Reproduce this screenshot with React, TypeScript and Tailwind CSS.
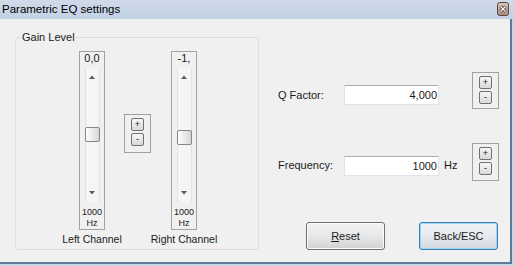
import type { ReactNode } from "react";

function Arrow({ up, className }: { up?: boolean; className?: string }) {
  return (
    <svg width="6" height="4" viewBox="0 0 6 4" className={className}>
      {up ? (
        <path d="M0 4 L3 0.5 L6 4 Z" fill="#5a5a5a" />
      ) : (
        <path d="M0 0 L3 3.5 L6 0 Z" fill="#5a5a5a" />
      )}
    </svg>
  );
}

function TinyButton({ children }: { children: ReactNode }) {
  return (
    <div className="flex h-[13px] w-[13px] items-center justify-center rounded-[2px] border border-[#707070] bg-linear-to-b from-[#f6f6f6] to-[#d9d9d9] text-[9px] leading-none text-[#222]">
      {children}
    </div>
  );
}

function PlusMinus({ className }: { className?: string }) {
  return (
    <div className={`flex w-[27px] flex-col items-center gap-[2px] border border-[#a0a0a0] pt-[3px] ${className ?? ""}`}>
      <TinyButton>+</TinyButton>
      <TinyButton>-</TinyButton>
    </div>
  );
}

function VSlider({ value, thumbOffset, label }: { value: string; thumbOffset: string; label: string }) {
  return (
    <div className="flex w-[26px] flex-col items-center">
      <div className="flex w-[26px] flex-col items-center border border-[#a3a3a3]">
        <div className="text-[11px] leading-[12px] text-[#1a1a1a]">{value}</div>
        {/* track */}
        <div className="mt-[4px] flex h-[134px] w-[15px] flex-col items-center bg-[#f5f5f5] shadow-[inset_1px_0_#e2e2e2,inset_-1px_0_#e2e2e2]">
          <Arrow up className="mt-[7px]" />
          <div
            className={`${thumbOffset} h-[15px] w-[15px] rounded-[2px] border border-[#858585] bg-linear-to-r from-white to-[#d6d6d6]`}
          />
          <Arrow className="mb-[7px] mt-auto" />
        </div>
        <div className="mt-[4px] text-[9px] leading-[12px] text-[#1a1a1a]">1000</div>
        <div className="text-[9px] leading-[11px] text-[#1a1a1a]">Hz</div>
      </div>
      <div className="mt-[3px] whitespace-nowrap text-[10.5px] leading-[13px] text-[#1a1a1a]">{label}</div>
    </div>
  );
}

function Field({ value }: { value: string }) {
  return (
    <div className="flex h-[20px] w-[95px] items-center justify-end border border-[#e2e3ea] border-t-[#abadb3] bg-white pr-[1px] text-[11px] text-[#1a1a1a]">
      {value}
    </div>
  );
}

export default function App() {
  return (
    <div className="flex h-[266px] w-[514px] flex-col bg-[#c6d4e6] font-['Liberation_Sans',Arial,sans-serif] text-black">
      {/* Title bar */}
      <div className="flex h-[19px] items-start justify-between bg-linear-to-b from-[#cfdaea] to-[#c3d2e5]">
        <span className="pl-[2px] text-[11.5px] leading-[19px] text-black">Parametric EQ settings</span>
        <svg width="12" height="14" viewBox="0 0 12 14" className="mr-[5px] mt-[2px]">
          <defs>
            <linearGradient id="closeGrad" x1="0" y1="0" x2="0" y2="1">
              <stop offset="0" stopColor="#dcc3bc" />
              <stop offset="1" stopColor="#a98479" />
            </linearGradient>
          </defs>
          <rect x="0.5" y="0.5" width="11" height="13" rx="2" fill="url(#closeGrad)" stroke="#5e463f" />
          <path d="M3.5 4.5 L8.5 9.5 M8.5 4.5 L3.5 9.5" stroke="#3b2d29" strokeWidth="2.8" />
          <path d="M3.5 4.5 L8.5 9.5 M8.5 4.5 L3.5 9.5" stroke="#ffffff" strokeWidth="1.3" />
        </svg>
      </div>

      {/* Body */}
      <div className="flex h-[245px] w-[512px] border-b-2 border-r-2 border-[#5d7899] bg-[#f0f0f0]">
        {/* Gain group */}
        <fieldset className="ml-[15px] mt-[12px] h-[219px] w-[244px] rounded-[3px] border border-[#d5dfe5]">
          <legend className="ml-[5px] px-[1px] text-[11px] leading-[13px] text-[#1a1a1a]">Gain Level</legend>
          <div className="ml-[63px] mt-[7px] flex items-start">
            <VSlider value="0,0" thumbOffset="mt-[48px]" label="Left Channel" />
            <PlusMinus className="ml-[19px] mt-[63px] h-[39px]" />
            <div className="ml-[20px]">
              <VSlider value="-1," thumbOffset="mt-[51px]" label="Right Channel" />
            </div>
          </div>
        </fieldset>

        {/* Right column */}
        <div className="ml-[19px] flex w-[221px] flex-col">
          <div className="mt-[53px] flex h-[37px] items-start">
            <span className="mt-[17px] w-[66px] text-[11px] leading-[13px] text-[#1a1a1a]">Q Factor:</span>
            <div className="mt-[13px]">
              <Field value="4,000" />
            </div>
            <PlusMinus className="ml-[33px] h-[37px]" />
          </div>

          <div className="mt-[34px] flex h-[38px] items-start">
            <span className="mt-[16px] w-[66px] text-[11px] leading-[13px] text-[#1a1a1a]">Frequency:</span>
            <div className="mt-[13px]">
              <Field value="1000" />
            </div>
            <span className="mt-[16px] w-[33px] pl-[5px] text-[11px] leading-[13px] text-[#1a1a1a]">Hz</span>
            <PlusMinus className="h-[38px]" />
          </div>

          <div className="mr-[1px] mt-[41px] flex justify-end gap-[34px]">
            <button className="h-[28px] w-[79px] rounded-[3px] border border-[#707070] bg-linear-to-b from-[#f3f3f3] via-[#e8e8e8] to-[#d2d2d2] text-[11px] text-[#1a1a1a] shadow-[inset_0_0_0_1px_#fbfbfb]">
              <span className="underline">R</span>eset
            </button>
            <button className="h-[28px] w-[79px] rounded-[3px] border border-[#3c7fb1] bg-linear-to-b from-[#f0f3f6] via-[#e6eaee] to-[#d3d9df] text-[11px] text-[#1a1a1a] shadow-[inset_0_0_0_1px_#9ed4f3]">
              Back/ESC
            </button>
          </div>
        </div>
      </div>
    </div>
  );
}
